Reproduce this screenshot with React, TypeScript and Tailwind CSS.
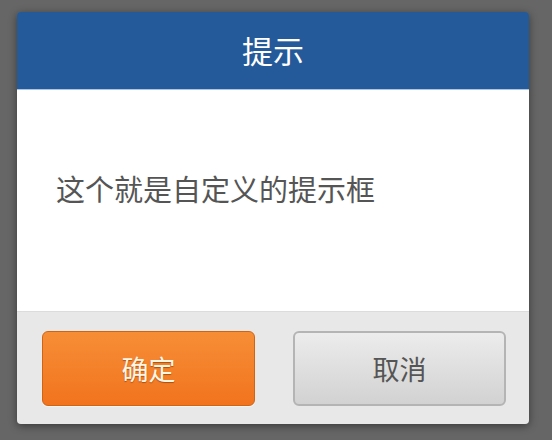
import React from "react";

export default function App() {
  const font = { fontFamily: '"Noto Sans CJK SC", "Noto Sans", sans-serif' };
  return (
    <div className="w-[552px] h-[440px] bg-[#666666] pt-[12px] pl-[17px]" style={font}>
      <div className="w-[512px] h-[412px] flex flex-col rounded-[4px] overflow-hidden shadow-[0_2px_8px_rgba(0,0,0,0.45)]">
        <div className="h-[77px] bg-[#255a9a] flex items-center justify-center text-white text-[31px] leading-none pb-[3px]">
          提示
        </div>
        <div className="h-[1px] bg-[#a9c4e4]" />
        <div className="flex-1 bg-white flex items-center pl-[39px] pb-[24px] text-[29px] text-[#555555] leading-none">
          这个就是自定义的提示框
        </div>
        <div className="h-[113px] bg-[#e8e8e8] border-t border-[#dcdcdc] flex gap-[38px] pl-[25px] pr-[23px] pt-[19px]">
          <button className="w-[213px] h-[75px] rounded-[6px] border border-[#cf6415] bg-gradient-to-b from-[#f68e36] to-[#f2731d] text-[#fff6e6] text-[27px] leading-none [text-shadow:0_1px_1px_rgba(120,50,0,0.6)] shadow-[0_1px_1px_rgba(255,255,255,0.6)]">
            确定
          </button>
          <button className="w-[213px] h-[75px] rounded-[6px] border-2 border-[#b4b4b4] bg-gradient-to-b from-[#ececec] to-[#d2d2d2] text-[#555555] text-[27px] leading-none">
            取消
          </button>
        </div>
      </div>
    </div>
  );
}
